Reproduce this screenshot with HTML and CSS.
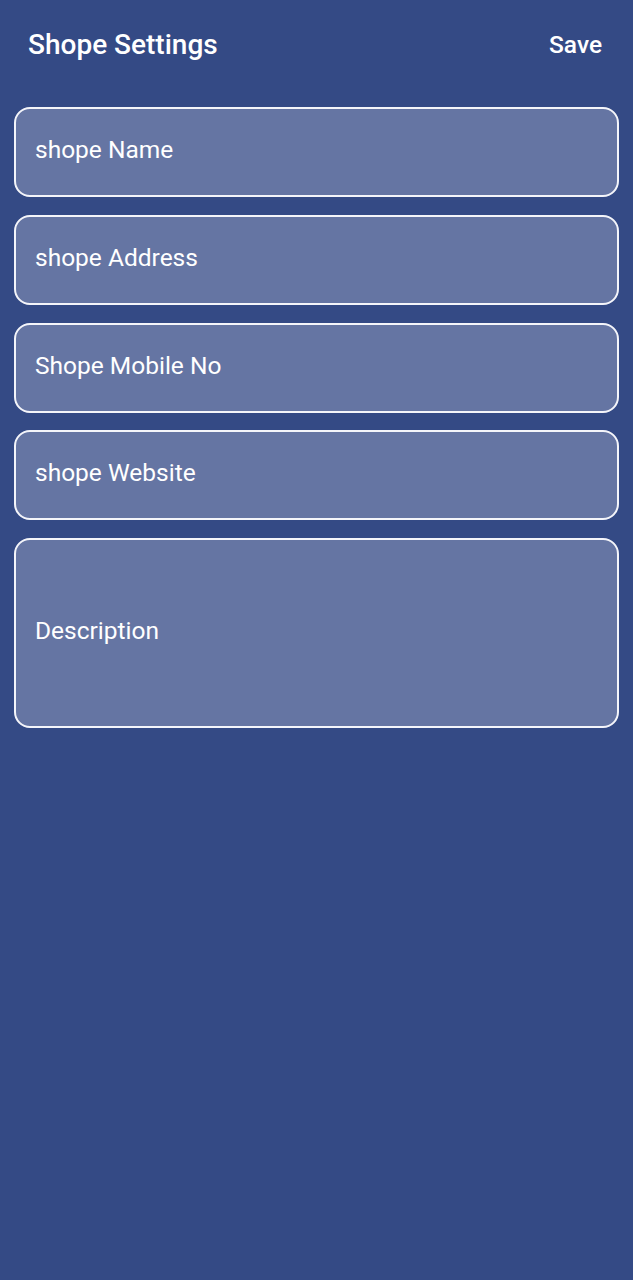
FILE: index.html
```html
<!DOCTYPE html>
<html>
<head>
<meta charset="utf-8">
<link rel="stylesheet" href="styles.css">
</head>
<body>
<div class="screen">
  <header class="topbar">
    <h1 class="title">Shope Settings</h1>
    <span class="save">Save</span>
  </header>
  <form class="form">
    <div class="field"><span class="label">shope Name</span></div>
    <div class="field"><span class="label">shope Address</span></div>
    <div class="field"><span class="label">Shope Mobile No</span></div>
    <div class="field"><span class="label">shope Website</span></div>
    <div class="field field-tall"><span class="label">Description</span></div>
  </form>
</div>
</body>
</html>
```

FILE: styles.css
```css
html, body {
  margin: 0;
  padding: 0;
  background: #344a85;
}
body {
  font-family: Roboto, "Liberation Sans", sans-serif;
  color: #ffffff;
}
.screen {
  width: 633px;
  height: 1280px;
  background: #344a85;
  box-sizing: border-box;
}
.topbar {
  display: flex;
  align-items: center;
  justify-content: space-between;
  height: 88px;
  padding: 0 31px 0 28px;
  box-sizing: border-box;
}
.title {
  margin: 0;
  font-size: 28px;
  font-weight: 500;
}
.save {
  font-size: 24.5px;
  font-weight: 500;
}
.form {
  display: flex;
  flex-direction: column;
  gap: 17.75px;
  padding: 19px 14px 0 14px;
}
.field {
  height: 90px;
  box-sizing: border-box;
  border: 2px solid #f4f5fa;
  border-radius: 16px;
  background: #6575a3;
  display: flex;
  align-items: center;
  padding-left: 19px;
  padding-bottom: 5px;
}
.field-tall {
  height: 190px;
}
.label {
  font-size: 24.5px;
  font-weight: 400;
}
```
